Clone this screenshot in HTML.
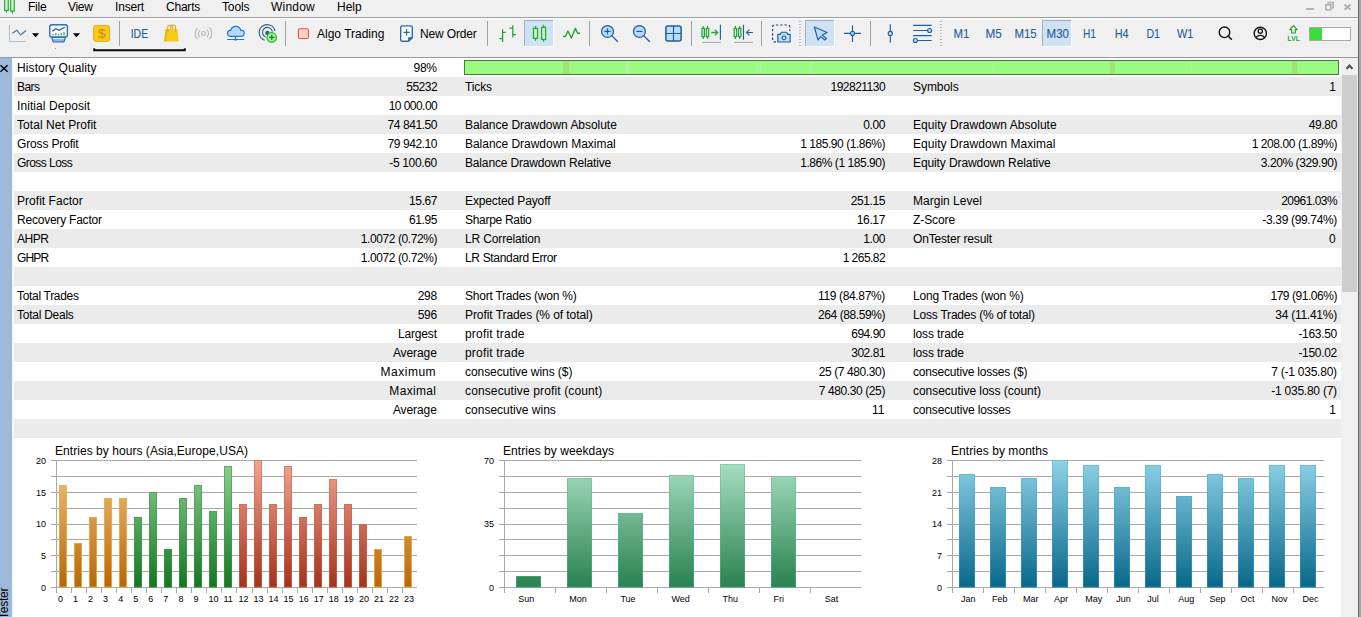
<!DOCTYPE html>
<html><head><meta charset="utf-8"><title>Tester</title>
<style>
*{margin:0;padding:0;box-sizing:border-box}
html,body{width:1361px;height:617px;overflow:hidden;background:#f0f0f0;font-family:"Liberation Sans",sans-serif;font-size:12px;color:#000}
.abs{position:absolute}
#menubar{position:absolute;left:0;top:0;width:1358px;height:17px;background:#f0f0f0}
#menubar span{position:absolute;top:-1px;font-size:12px;line-height:16px;color:#000;white-space:nowrap}
#msep{position:absolute;left:0;top:17px;width:1358px;height:1px;background:#a0a0a0}
#msep2{position:absolute;left:0;top:18px;width:1358px;height:1px;background:#fff}
#toolbar{position:absolute;left:0;top:19px;width:1358px;height:38px;background:#f0f0f0}
#tsep{position:absolute;left:0;top:57px;width:1358px;height:1px;background:#999999}
.tt{position:absolute;font-size:12px;line-height:16px;white-space:nowrap}
.vsep{position:absolute;top:21px;width:1px;height:25px;background:#a0a0a0}
#left{position:absolute;left:0;top:58px;width:12px;height:559px;background:#9db9da}
#left2{position:absolute;left:12px;top:58px;width:2px;height:559px;background:#f4f7fb}
#content{position:absolute;left:14px;top:58px;width:1327px;height:559px;background:#fff}
.row{position:absolute;left:0;width:1327px;height:19px}
.g{background:#ebebeb}
.c{position:absolute;top:1px;height:19px;line-height:19px;font-size:12px;white-space:nowrap;color:#000}
.l{text-align:left}
.r{text-align:right}
.v{letter-spacing:-0.55px}
#sb{position:absolute;left:1341px;top:58px;width:17px;height:559px;background:#f0f0f0}
#thumb{position:absolute;left:1342px;top:75px;width:15px;height:217px;background:#cdcdcd}
#rb{position:absolute;left:1358px;top:0;width:1px;height:617px;background:#6c6c6c}
#rb2{position:absolute;left:1359px;top:0;width:2px;height:617px;background:#a4a4a4}
svg{position:absolute;left:0;top:0;overflow:visible}
svg text{font-family:"Liberation Sans",sans-serif}
</style></head><body>

<div id="menubar">
<span style="left:28px;letter-spacing:-0.25px">File</span>
<span style="left:68px;letter-spacing:-0.33px">View</span>
<span style="left:115px;letter-spacing:-0.17px">Insert</span>
<span style="left:166px;letter-spacing:-0.22px">Charts</span>
<span style="left:222px;letter-spacing:-0.14px">Tools</span>
<span style="left:271px;letter-spacing:0.22px">Window</span>
<span style="left:337px;letter-spacing:0px">Help</span>
</div><div id="msep"></div><div id="msep2"></div>
<div id="toolbar"></div><div id="tsep"></div>
<span class="tt" style="left:317px;top:26px;color:#000">Algo Trading</span>
<span class="tt" style="left:420px;top:26px;color:#000;letter-spacing:-0.15px">New Order</span>
<div class="vsep" style="left:119px"></div>
<div class="vsep" style="left:285px"></div>
<div class="vsep" style="left:487px"></div>
<div class="vsep" style="left:589px"></div>
<div class="vsep" style="left:691px"></div>
<div class="vsep" style="left:761px"></div>
<div class="vsep" style="left:870px"></div>
<svg id="icons" width="1361" height="58" viewBox="0 0 1361 58">
<!-- app icon -->
<g stroke="#1fa12e" stroke-width="1.1" fill="#c8f6c8">
<rect x="4.65" y="-3" width="3.6" height="13.5"/><path d="M6.45 10.5V12.7" fill="none"/>
<rect x="10.65" y="-3" width="3.6" height="14.1"/><path d="M12.45 11.1V13.8" fill="none"/>
</g>
<!-- window controls -->
<rect x="1306" y="8" width="8" height="2" fill="#b4b4b4"/>
<g fill="none" stroke="#b4b4b4" stroke-width="1.6"><rect x="1325.8" y="4.8" width="5" height="5"/><path d="M1328 4V2.6H1333.2V7.8H1331.6"/></g>
<path d="M1344.5 4.5L1350.5 9.5M1350.5 4.5L1344.5 9.5" stroke="#b0b0b0" stroke-width="2" fill="none"/>

<!-- 1 line chart icon -->
<path d="M9.5 25V41.5H26" fill="none" stroke="#b4bcc4" stroke-width="1"/>
<path d="M12.3 33.2L16.8 30.2L20.7 35L26 30.5" fill="none" stroke="#3878b4" stroke-width="1.15"/>
<path d="M32 33.2H39.2L35.6 37.3Z" fill="#000"/>
<!-- 2 monitor chart icon -->
<rect x="49.8" y="24.7" width="17.6" height="12.2" rx="2" fill="#f4faff" stroke="#2a70b4" stroke-width="1.4"/>
<path d="M51.8 37.5L53.2 41.9H64L65.4 37.5Z" fill="#d8ecfc" stroke="#2a70b4" stroke-width="1.2" stroke-linejoin="round"/>
<path d="M52.5 40H64.8" stroke="#2a70b4" stroke-width="0.8"/>
<path d="M52.3 31.3L55.8 28.8L59 30.3L64.7 27.3" fill="none" stroke="#3a5a78" stroke-width="1.2"/>
<path d="M53 35.5V34M55.8 35.5V33M58.5 35.5V34M61.3 35.5V33.3M64 35.5V32" stroke="#3aa83a" stroke-width="1.2"/>
<rect x="55" y="48" width="1" height="1" fill="#9a9a9a"/>
<path d="M72.8 33.2H80L76.4 37.3Z" fill="#000"/>
<!-- 3 dollar -->
<rect x="93.6" y="25.4" width="16" height="16" rx="2.2" fill="#fbc916" stroke="#e2ae20" stroke-width="1"/>
<text x="101.7" y="38.2" font-size="13.5" text-anchor="middle" fill="#c98c14" font-family="Liberation Sans">$</text>
<!-- underline annotation -->
<path d="M94.2 48.2V50.2H184.8V48.2" fill="none" stroke="#0a0a0a" stroke-width="1.9"/>
<!-- IDE -->
<text x="130.7" y="38" font-size="12.4" fill="#1f5f92" stroke="#1f5f92" stroke-width="0.12" font-family="Liberation Sans" textLength="17.4" lengthAdjust="spacingAndGlyphs">IDE</text>
<!-- bag -->
<path d="M167.6 30V28a2.5 3 0 0 1 5 0V30M170.6 30V28a2.5 3 0 0 1 5 0V30" fill="none" stroke="#dda520" stroke-width="1.05"/>
<path d="M165.7 29.2H177.4L178.8 41.6H164.2Z" fill="#f9ca12"/>
<path d="M165.7 29.2L167.2 29.2L166 41.6H164.2Z" fill="#e9b010"/>
<path d="M168 29.4V31.4M175.8 29.4V31.4" stroke="#c8921a" stroke-width="1"/>
<!-- signals ((o)) -->
<g fill="none" stroke="#bcbcbc" stroke-width="1.2">
<circle cx="203.5" cy="33.4" r="1.9"/>
<path d="M200.2 29.6a5 5 0 0 0 0 7.6M206.8 29.6a5 5 0 0 1 0 7.6"/>
<path d="M197.6 27.6a8.2 8.2 0 0 0 0 11.6M209.4 27.6a8.2 8.2 0 0 1 0 11.6"/>
</g>
<!-- cloud -->
<path d="M230.3 36.4H241.1A3.1 3.1 0 0 0 241.1 30.2L240.8 30.4A5.1 5.1 0 0 0 230.8 30.4A3 3 0 0 0 230.3 36.4Z" fill="#b4dafa" stroke="#2a78c0" stroke-width="1.2" stroke-linejoin="round"/>
<path d="M235.5 36.6V39.4M227 39.5H244.2" stroke="#2a78c0" stroke-width="1.2" fill="none"/>
<circle cx="235.5" cy="39.7" r="1.1" fill="#2a78c0"/>
<!-- radar -->
<g fill="none" stroke="#2c5c8c" stroke-width="1.15">
<path d="M264.6 40.2a8 8 0 1 1 10.4 -9.2"/>
<path d="M265.6 37a5 5 0 1 1 6.8 -5.4"/>
<circle cx="267.4" cy="33" r="1.6" fill="#2c5c8c"/>
</g>
<circle cx="271.7" cy="37.4" r="4.7" fill="#9af09a" stroke="#2fb22f" stroke-width="1.2"/>
<path d="M269 37.4H274.4M271.7 34.7V40.1" stroke="#1c8a1c" stroke-width="1.3"/>
<!-- algo square -->
<rect x="298.4" y="28.7" width="10" height="9.8" rx="1.6" fill="#fdd2c4" stroke="#e05252" stroke-width="1.1"/>
<!-- new order -->
<path d="M402.2 25.9H410.8a1.5 1.5 0 0 1 1.5 1.5V37.6L408.6 41.2H402.2a1.5 1.5 0 0 1 -1.5 -1.5V27.4a1.5 1.5 0 0 1 1.5 -1.5Z" fill="#fff" stroke="#2a6aa8" stroke-width="1.4"/>
<path d="M412.3 37.6H408.6V41.2Z" fill="#2a6aa8" stroke="#2a6aa8" stroke-width="0.8"/>
<path d="M403.4 32.3H409.8M406.6 29.1V35.5" stroke="#2a6aa8" stroke-width="1.2"/>
<!-- bar chart icon -->
<g fill="none" stroke="#22a236" stroke-width="1.25">
<path d="M502.6 29.2V42M499.2 38.5H502.6M502.6 32.3H505.8"/>
<path d="M512.8 25.3V37.6M509.4 28.2H512.8M512.8 34.5H516"/>
</g>
<!-- candles selected -->
<rect x="524" y="20" width="29" height="26" fill="#cfe1f5"/>
<path d="M524.5 46V20.5H553" fill="none" stroke="#a6b0bc" stroke-width="1"/>
<path d="M524.5 46.5H553.5V20.5" fill="none" stroke="#fff" stroke-width="1"/>
<g stroke="#1fb030" stroke-width="1.3" fill="#cdf5cd">
<path d="M535.5 26V28.3M535.5 38.5V40.8" fill="none"/><rect x="533.5" y="28.4" width="4" height="10"/>
<path d="M543.6 24.8V27.3M543.6 39.4V41.7" fill="none"/><rect x="541.6" y="27.4" width="4" height="12"/>
</g>
<!-- zigzag -->
<path d="M563 36.5H565.4L567.9 31L571.4 38L575.4 28.3L577.6 33.2H580" fill="none" stroke="#22a236" stroke-width="1.4" stroke-linejoin="round"/>
<!-- zoom in/out -->
<g stroke="#1f5f98" stroke-width="1.25" fill="#bbddfb">
<circle cx="607.5" cy="31.4" r="5.9"/><path d="M611.8 35.8L617.8 41.7" fill="none"/><path d="M604.4 31.4H610.6M607.5 28.3V34.5" fill="none" stroke-width="1.2"/>
<circle cx="639.4" cy="31.4" r="5.9"/><path d="M643.7 35.8L649.8 41.7" fill="none"/><path d="M636.3 31.4H642.5" fill="none" stroke-width="1.2"/>
</g>
<!-- grid -->
<rect x="665.9" y="25.9" width="15.2" height="15.2" rx="2" fill="#bbddfb" stroke="#1f5f98" stroke-width="1.5"/>
<path d="M673.5 26V41M666 33.5H681" stroke="#1f5f98" stroke-width="1.15"/>
<!-- autoscroll -->
<g stroke="#22a236" stroke-width="1.2" fill="#d0f4d0">
<path d="M703.2 26V28.4M703.2 36.6V39" fill="none"/><rect x="702" y="28.4" width="2.4" height="8.2"/>
<path d="M707.5 26V28.4M707.5 36.6V39" fill="none"/><rect x="706.3" y="28.4" width="2.4" height="8.2"/>
<path d="M711.2 32.5H717.6M714.8 29.6L717.7 32.5L714.8 35.4" fill="none" stroke-width="1.3"/>
</g>
<path d="M720.4 24.8V39.8" stroke="#1f5f98" stroke-width="1.15"/>
<path d="M702 42.4H721" stroke="#a0a0a0" stroke-width="0.9"/>
<!-- shift -->
<g stroke="#22a236" stroke-width="1.2" fill="#d0f4d0">
<path d="M735.4 26V28.4M735.4 36.6V39" fill="none"/><rect x="734.2" y="28.4" width="2.4" height="8.2"/>
<path d="M739.7 26V28.4M739.7 36.6V39" fill="none"/><rect x="738.5" y="28.4" width="2.4" height="8.2"/>
</g>
<path d="M743.5 24.8V39.8M753 32.5H746.6M749.4 29.6L746.5 32.5L749.4 35.4" stroke="#1f5f98" stroke-width="1.15" fill="none"/>
<path d="M734 42.4H753" stroke="#a0a0a0" stroke-width="0.9"/>
<!-- camera -->
<path d="M776 41.9H774.4a1.8 1.8 0 0 1 -1.8 -1.8V26.8a1.8 1.8 0 0 1 1.8 -1.8H788a1.8 1.8 0 0 1 1.8 1.8V31" fill="none" stroke="#2a4a68" stroke-width="1.2" stroke-dasharray="2.4 1.9"/>
<path d="M777.8 42V34.4H780.2L781.6 32.2H786.4L787.8 34.4H790.2V42Z" fill="#bbddfb" stroke="#1f5f98" stroke-width="1.15" stroke-linejoin="round"/>
<circle cx="784" cy="37.8" r="1.8" fill="#e8f4ff" stroke="#1f5f98" stroke-width="1.2"/>
<!-- grips -->
<rect x="799" y="21" width="2" height="1" fill="#b8b8b8"/><rect x="800" y="22" width="1" height="1" fill="#fff"/><rect x="799" y="24" width="2" height="1" fill="#b8b8b8"/><rect x="800" y="25" width="1" height="1" fill="#fff"/><rect x="799" y="27" width="2" height="1" fill="#b8b8b8"/><rect x="800" y="28" width="1" height="1" fill="#fff"/><rect x="799" y="30" width="2" height="1" fill="#b8b8b8"/><rect x="800" y="31" width="1" height="1" fill="#fff"/><rect x="799" y="33" width="2" height="1" fill="#b8b8b8"/><rect x="800" y="34" width="1" height="1" fill="#fff"/><rect x="799" y="36" width="2" height="1" fill="#b8b8b8"/><rect x="800" y="37" width="1" height="1" fill="#fff"/><rect x="799" y="39" width="2" height="1" fill="#b8b8b8"/><rect x="800" y="40" width="1" height="1" fill="#fff"/><rect x="799" y="42" width="2" height="1" fill="#b8b8b8"/><rect x="800" y="43" width="1" height="1" fill="#fff"/><rect x="799" y="45" width="2" height="1" fill="#b8b8b8"/><rect x="800" y="46" width="1" height="1" fill="#fff"/><rect x="940" y="21" width="2" height="1" fill="#b8b8b8"/><rect x="941" y="22" width="1" height="1" fill="#fff"/><rect x="940" y="24" width="2" height="1" fill="#b8b8b8"/><rect x="941" y="25" width="1" height="1" fill="#fff"/><rect x="940" y="27" width="2" height="1" fill="#b8b8b8"/><rect x="941" y="28" width="1" height="1" fill="#fff"/><rect x="940" y="30" width="2" height="1" fill="#b8b8b8"/><rect x="941" y="31" width="1" height="1" fill="#fff"/><rect x="940" y="33" width="2" height="1" fill="#b8b8b8"/><rect x="941" y="34" width="1" height="1" fill="#fff"/><rect x="940" y="36" width="2" height="1" fill="#b8b8b8"/><rect x="941" y="37" width="1" height="1" fill="#fff"/><rect x="940" y="39" width="2" height="1" fill="#b8b8b8"/><rect x="941" y="40" width="1" height="1" fill="#fff"/><rect x="940" y="42" width="2" height="1" fill="#b8b8b8"/><rect x="941" y="43" width="1" height="1" fill="#fff"/><rect x="940" y="45" width="2" height="1" fill="#b8b8b8"/><rect x="941" y="46" width="1" height="1" fill="#fff"/>
<!-- cursor selected -->
<rect x="805" y="20" width="29" height="26" fill="#cfe1f5"/>
<path d="M805.5 46V20.5H834" fill="none" stroke="#a6b0bc" stroke-width="1"/>
<path d="M805.5 46.5H834.5V20.5" fill="none" stroke="#fff" stroke-width="1"/>
<path d="M814.3 27L827 32.5L822.2 35.1L826.5 38.5L824.8 40L820.7 36.6L818.1 40Z" fill="#bbddfb" stroke="#1f5f98" stroke-width="1.15" stroke-linejoin="round"/>
<!-- crosshair -->
<path d="M844 33.4H861M852.5 25.4V41.9" stroke="#1f5f98" stroke-width="1.15"/>
<circle cx="852.5" cy="33.4" r="2" fill="#bbddfb" stroke="#1f5f98" stroke-width="1.1"/>
<!-- vline -->
<path d="M890.3 24.3V42.8" stroke="#1f5f98" stroke-width="1.15"/>
<circle cx="890.3" cy="33.5" r="2.1" fill="#bbddfb" stroke="#1f5f98" stroke-width="1.1"/>
<!-- lines -->
<path d="M913.2 25.4H931.7M913.2 30.5H927.6M913.2 35.6H931.7M917.4 40.5H931.7" stroke="#1f5f98" stroke-width="1.15"/>
<circle cx="929.6" cy="30.5" r="2" fill="#bbddfb" stroke="#1f5f98" stroke-width="1.1"/>
<circle cx="915.4" cy="40.5" r="2" fill="#bbddfb" stroke="#1f5f98" stroke-width="1.1"/>
<!-- M30 selected -->
<rect x="1042" y="20" width="29" height="26" fill="#cfe1f5"/>
<path d="M1042.5 46V20.5H1071" fill="none" stroke="#a6b0bc" stroke-width="1"/>
<path d="M1042.5 46.5H1071.5V20.5" fill="none" stroke="#fff" stroke-width="1"/>
<g font-size="12.4" fill="#22609a" stroke="#22609a" stroke-width="0.1" font-family="Liberation Sans">
<text x="953.5" y="38" textLength="15.8" lengthAdjust="spacingAndGlyphs">M1</text>
<text x="985.5" y="38" textLength="16.3" lengthAdjust="spacingAndGlyphs">M5</text>
<text x="1014.4" y="38" textLength="22.2" lengthAdjust="spacingAndGlyphs">M15</text>
<text x="1046.6" y="38" textLength="22.4" lengthAdjust="spacingAndGlyphs">M30</text>
<text x="1083" y="38" textLength="13" lengthAdjust="spacingAndGlyphs">H1</text>
<text x="1114.7" y="38" textLength="13.9" lengthAdjust="spacingAndGlyphs">H4</text>
<text x="1146.4" y="38" textLength="13.5" lengthAdjust="spacingAndGlyphs">D1</text>
<text x="1177" y="38" textLength="16.4" lengthAdjust="spacingAndGlyphs">W1</text>
</g>
<!-- search -->
<circle cx="1224.5" cy="32.3" r="5.3" fill="none" stroke="#111" stroke-width="1.4"/>
<path d="M1228.4 36.2L1231.8 39.7" stroke="#111" stroke-width="1.5"/>
<!-- account -->
<circle cx="1260.3" cy="33.4" r="6.1" fill="none" stroke="#111" stroke-width="1.4"/>
<circle cx="1260.3" cy="31.3" r="2.1" fill="none" stroke="#111" stroke-width="1.3"/>
<path d="M1256 37.8a4.6 3.8 0 0 1 8.6 0" fill="none" stroke="#111" stroke-width="1.3"/>
<!-- LVL -->
<path d="M1293.5 25.7L1297.2 29.6H1295.3V33H1291.7V29.6H1289.8Z" fill="none" stroke="#22a236" stroke-width="1.2" stroke-linejoin="round"/>
<text x="1287.6" y="40.8" font-size="7.4" font-weight="bold" fill="#22a236" font-family="Liberation Sans" textLength="12.2" lengthAdjust="spacingAndGlyphs">LVL</text>
<!-- progress -->
<rect x="1309.5" y="27.5" width="41" height="13" fill="#fff" stroke="#a8a8a8" stroke-width="1"/>
<rect x="1310" y="28" width="12" height="12" fill="#3edb3e"/>

</svg>
<div id="left"></div><div id="left2"></div>
<div id="content">
<div class="row" style="top:0px">
<span class="c l" style="left:3px;letter-spacing:0.10px">History Quality</span>
<span class="c r" style="right:904.19px;letter-spacing:-0.21px">98%</span>
</div>
<div class="row g" style="top:19px">
<span class="c l" style="left:3px;letter-spacing:-0.57px">Bars</span>
<span class="c r" style="right:903.90px;letter-spacing:-0.50px">55232</span>
<span class="c l" style="left:451px;letter-spacing:-0.13px">Ticks</span>
<span class="c r" style="right:455.89px;letter-spacing:-0.51px">192821130</span>
<span class="c l" style="left:899px;letter-spacing:-0.05px">Symbols</span>
<span class="c r" style="right:4.71px;letter-spacing:0.31px">1</span>
</div>
<div class="row" style="top:38px">
<span class="c l" style="left:3px;letter-spacing:0.07px">Initial Deposit</span>
<span class="c r" style="right:903.85px;letter-spacing:-0.55px">10 000.00</span>
</div>
<div class="row g" style="top:57px">
<span class="c l" style="left:3px;letter-spacing:0.05px">Total Net Profit</span>
<span class="c r" style="right:903.97px;letter-spacing:-0.43px">74 841.50</span>
<span class="c l" style="left:451px;letter-spacing:-0.04px">Balance Drawdown Absolute</span>
<span class="c r" style="right:456.01px;letter-spacing:-0.39px">0.00</span>
<span class="c l" style="left:899px;letter-spacing:0.04px">Equity Drawdown Absolute</span>
<span class="c r" style="right:4.03px;letter-spacing:-0.37px">49.80</span>
</div>
<div class="row" style="top:76px">
<span class="c l" style="left:3px;letter-spacing:-0.15px">Gross Profit</span>
<span class="c r" style="right:903.97px;letter-spacing:-0.43px">79 942.10</span>
<span class="c l" style="left:451px;letter-spacing:-0.03px">Balance Drawdown Maximal</span>
<span class="c r" style="right:455.95px;letter-spacing:-0.45px">1 185.90 (1.86%)</span>
<span class="c l" style="left:899px;letter-spacing:0.05px">Equity Drawdown Maximal</span>
<span class="c r" style="right:3.98px;letter-spacing:-0.42px">1 208.00 (1.89%)</span>
</div>
<div class="row g" style="top:95px">
<span class="c l" style="left:3px;letter-spacing:-0.55px">Gross Loss</span>
<span class="c r" style="right:904.06px;letter-spacing:-0.34px">-5 100.60</span>
<span class="c l" style="left:451px;letter-spacing:-0.16px">Balance Drawdown Relative</span>
<span class="c r" style="right:455.95px;letter-spacing:-0.45px">1.86% (1 185.90)</span>
<span class="c l" style="left:899px;letter-spacing:-0.10px">Equity Drawdown Relative</span>
<span class="c r" style="right:3.99px;letter-spacing:-0.41px">3.20% (329.90)</span>
</div>
<div class="row" style="top:114px">
</div>
<div class="row g" style="top:133px">
<span class="c l" style="left:3px;letter-spacing:0.04px">Profit Factor</span>
<span class="c r" style="right:904.01px;letter-spacing:-0.39px">15.67</span>
<span class="c l" style="left:451px;letter-spacing:-0.12px">Expected Payoff</span>
<span class="c r" style="right:456.00px;letter-spacing:-0.40px">251.15</span>
<span class="c l" style="left:899px;letter-spacing:0.01px">Margin Level</span>
<span class="c r" style="right:3.87px;letter-spacing:-0.53px">20961.03%</span>
</div>
<div class="row" style="top:152px">
<span class="c l" style="left:3px;letter-spacing:-0.22px">Recovery Factor</span>
<span class="c r" style="right:904.01px;letter-spacing:-0.39px">61.95</span>
<span class="c l" style="left:451px;letter-spacing:-0.30px">Sharpe Ratio</span>
<span class="c r" style="right:456.03px;letter-spacing:-0.37px">16.17</span>
<span class="c l" style="left:899px;letter-spacing:-0.08px">Z-Score</span>
<span class="c r" style="right:4.06px;letter-spacing:-0.34px">-3.39 (99.74%)</span>
</div>
<div class="row g" style="top:171px">
<span class="c l" style="left:3px;letter-spacing:-0.51px">AHPR</span>
<span class="c r" style="right:903.98px;letter-spacing:-0.42px">1.0072 (0.72%)</span>
<span class="c l" style="left:451px;letter-spacing:-0.14px">LR Correlation</span>
<span class="c r" style="right:456.01px;letter-spacing:-0.39px">1.00</span>
<span class="c l" style="left:899px;letter-spacing:-0.17px">OnTester result</span>
<span class="c r" style="right:4.90px;letter-spacing:0.50px">0</span>
</div>
<div class="row" style="top:190px">
<span class="c l" style="left:3px;letter-spacing:-0.84px">GHPR</span>
<span class="c r" style="right:903.98px;letter-spacing:-0.42px">1.0072 (0.72%)</span>
<span class="c l" style="left:451px;letter-spacing:-0.33px">LR Standard Error</span>
<span class="c r" style="right:455.87px;letter-spacing:-0.53px">1 265.82</span>
</div>
<div class="row g" style="top:209px">
</div>
<div class="row" style="top:228px">
<span class="c l" style="left:3px;letter-spacing:-0.31px">Total Trades</span>
<span class="c r" style="right:904.12px;letter-spacing:-0.28px">298</span>
<span class="c l" style="left:451px;letter-spacing:-0.23px">Short Trades (won %)</span>
<span class="c r" style="right:456.05px;letter-spacing:-0.35px">119 (84.87%)</span>
<span class="c l" style="left:899px;letter-spacing:-0.19px">Long Trades (won %)</span>
<span class="c r" style="right:3.95px;letter-spacing:-0.45px">179 (91.06%)</span>
</div>
<div class="row g" style="top:247px">
<span class="c l" style="left:3px;letter-spacing:-0.25px">Total Deals</span>
<span class="c r" style="right:904.12px;letter-spacing:-0.28px">596</span>
<span class="c l" style="left:451px;letter-spacing:-0.07px">Profit Trades (% of total)</span>
<span class="c r" style="right:455.98px;letter-spacing:-0.42px">264 (88.59%)</span>
<span class="c l" style="left:899px;letter-spacing:-0.21px">Loss Trades (% of total)</span>
<span class="c r" style="right:4.13px;letter-spacing:-0.27px">34 (11.41%)</span>
</div>
<div class="row" style="top:266px">
<span class="c r" style="right:904.21px;letter-spacing:-0.19px">Largest</span>
<span class="c l" style="left:451px;letter-spacing:0.19px">profit trade</span>
<span class="c r" style="right:455.93px;letter-spacing:-0.47px">694.90</span>
<span class="c l" style="left:899px;letter-spacing:-0.11px">loss trade</span>
<span class="c r" style="right:4.09px;letter-spacing:-0.31px">-163.50</span>
</div>
<div class="row g" style="top:285px">
<span class="c r" style="right:904.30px;letter-spacing:-0.10px">Average</span>
<span class="c l" style="left:451px;letter-spacing:0.19px">profit trade</span>
<span class="c r" style="right:455.93px;letter-spacing:-0.47px">302.81</span>
<span class="c l" style="left:899px;letter-spacing:-0.11px">loss trade</span>
<span class="c r" style="right:4.09px;letter-spacing:-0.31px">-150.02</span>
</div>
<div class="row" style="top:304px">
<span class="c r" style="right:904.90px;letter-spacing:0.50px">Maximum</span>
<span class="c l" style="left:451px;letter-spacing:-0.07px">consecutive wins ($)</span>
<span class="c r" style="right:456.01px;letter-spacing:-0.39px">25 (7 480.30)</span>
<span class="c l" style="left:899px;letter-spacing:-0.20px">consecutive losses ($)</span>
<span class="c r" style="right:4.16px;letter-spacing:-0.24px">7 (-1 035.80)</span>
</div>
<div class="row g" style="top:323px">
<span class="c r" style="right:904.72px;letter-spacing:0.32px">Maximal</span>
<span class="c l" style="left:451px;letter-spacing:0.13px">consecutive profit (count)</span>
<span class="c r" style="right:456.01px;letter-spacing:-0.39px">7 480.30 (25)</span>
<span class="c l" style="left:899px;letter-spacing:-0.03px">consecutive loss (count)</span>
<span class="c r" style="right:4.16px;letter-spacing:-0.24px">-1 035.80 (7)</span>
</div>
<div class="row" style="top:342px">
<span class="c r" style="right:904.30px;letter-spacing:-0.10px">Average</span>
<span class="c l" style="left:451px;letter-spacing:0.01px">consecutive wins</span>
<span class="c r" style="right:456.47px;letter-spacing:0.07px">11</span>
<span class="c l" style="left:899px;letter-spacing:-0.17px">consecutive losses</span>
<span class="c r" style="right:4.71px;letter-spacing:0.31px">1</span>
</div>
<div class="row g" style="top:361px">
</div>
<div class="abs" style="left:450px;top:2px;width:875px;height:15px;background:#99fb7f;border:1px solid #4a7842"></div>
<div class="abs" style="left:549px;top:3px;width:6px;height:13px;background:#a0e476"></div>
<div class="abs" style="left:557px;top:3px;width:1px;height:13px;background:#a8f294"></div>
<div class="abs" style="left:612px;top:3px;width:3px;height:13px;background:#b6f0a6"></div>
<div class="abs" style="left:743px;top:3px;width:1px;height:13px;background:#b6f0a6"></div>
<div class="abs" style="left:746px;top:3px;width:1px;height:13px;background:#b6f0a6"></div>
<div class="abs" style="left:796px;top:3px;width:2px;height:13px;background:#b6f0a6"></div>
<div class="abs" style="left:979px;top:3px;width:1px;height:13px;background:#b6f0a6"></div>
<div class="abs" style="left:1096px;top:3px;width:5px;height:13px;background:#a0e476"></div>
<div class="abs" style="left:1177px;top:3px;width:1px;height:13px;background:#b6f0a6"></div>
<div class="abs" style="left:1278px;top:3px;width:5px;height:13px;background:#a0e476"></div>
</div>
<div id="sb"></div><div id="thumb"></div>
<svg width="1361" height="617" viewBox="0 0 1361 617" style="pointer-events:none"><path d="M1346.5 68.9 L1349.5 65.5 L1352.5 68.9" fill="none" stroke="#4c4c4c" stroke-width="2.1"/></svg>
<div id="rb"></div><div id="rb2"></div>
<div class="abs" style="left:-3.5px;top:619px;transform-origin:0 0;transform:rotate(-90deg);font-size:12px;line-height:14px;letter-spacing:-0.25px;white-space:nowrap;color:#000">Tester</div>
<svg width="14" height="80" viewBox="0 0 14 80"><path d="M0.4 65.2 L7.6 71.8 M7.6 65.2 L0.4 71.8" stroke="#000" stroke-width="1.5" fill="none"/></svg>
<svg id="charts" width="1361" height="617" viewBox="0 0 1361 617"><defs>
<linearGradient id="go" gradientUnits="userSpaceOnUse" x1="0" y1="460" x2="0" y2="588"><stop offset="0" stop-color="#f3c67c"/><stop offset="1" stop-color="#b5660c"/></linearGradient>
<linearGradient id="gos" gradientUnits="userSpaceOnUse" x1="0" y1="460" x2="0" y2="588"><stop offset="0" stop-color="#ecb45c"/><stop offset="1" stop-color="#eaa02e"/></linearGradient>
<linearGradient id="gg" gradientUnits="userSpaceOnUse" x1="0" y1="460" x2="0" y2="588"><stop offset="0" stop-color="#90d296"/><stop offset="1" stop-color="#147620"/></linearGradient>
<linearGradient id="ggs" gradientUnits="userSpaceOnUse" x1="0" y1="460" x2="0" y2="588"><stop offset="0" stop-color="#62b06a"/><stop offset="1" stop-color="#2c8a34"/></linearGradient>
<linearGradient id="gr" gradientUnits="userSpaceOnUse" x1="0" y1="460" x2="0" y2="588"><stop offset="0" stop-color="#f2a692"/><stop offset="1" stop-color="#a3321a"/></linearGradient>
<linearGradient id="grs" gradientUnits="userSpaceOnUse" x1="0" y1="460" x2="0" y2="588"><stop offset="0" stop-color="#d4826e"/><stop offset="1" stop-color="#c0523a"/></linearGradient>
<linearGradient id="gw" gradientUnits="userSpaceOnUse" x1="0" y1="460" x2="0" y2="588"><stop offset="0" stop-color="#aae0c4"/><stop offset="1" stop-color="#27814f"/></linearGradient>
<linearGradient id="gws" gradientUnits="userSpaceOnUse" x1="0" y1="460" x2="0" y2="588"><stop offset="0" stop-color="#8ad0ae"/><stop offset="1" stop-color="#3e9868"/></linearGradient>
<linearGradient id="gb" gradientUnits="userSpaceOnUse" x1="0" y1="460" x2="0" y2="588"><stop offset="0" stop-color="#8ed2e6"/><stop offset="1" stop-color="#07678a"/></linearGradient>
<linearGradient id="gbs" gradientUnits="userSpaceOnUse" x1="0" y1="460" x2="0" y2="588"><stop offset="0" stop-color="#70c0da"/><stop offset="1" stop-color="#1f80a2"/></linearGradient>
</defs>
<rect x="51" y="460" width="366" height="1" fill="#a9a9a9"/>
<rect x="51" y="476" width="366" height="1" fill="#a9a9a9"/>
<rect x="51" y="492" width="366" height="1" fill="#a9a9a9"/>
<rect x="51" y="508" width="366" height="1" fill="#a9a9a9"/>
<rect x="51" y="524" width="366" height="1" fill="#a9a9a9"/>
<rect x="51" y="539" width="366" height="1" fill="#a9a9a9"/>
<rect x="51" y="555" width="366" height="1" fill="#a9a9a9"/>
<rect x="51" y="571" width="366" height="1" fill="#a9a9a9"/>
<rect x="51" y="587" width="366" height="1" fill="#a9a9a9"/>
<rect x="56" y="460" width="1" height="133" fill="#a9a9a9"/>
<rect x="71" y="587" width="1" height="6" fill="#a9a9a9"/>
<rect x="86" y="587" width="1" height="6" fill="#a9a9a9"/>
<rect x="101" y="587" width="1" height="6" fill="#a9a9a9"/>
<rect x="116" y="587" width="1" height="6" fill="#a9a9a9"/>
<rect x="131" y="587" width="1" height="6" fill="#a9a9a9"/>
<rect x="146" y="587" width="1" height="6" fill="#a9a9a9"/>
<rect x="161" y="587" width="1" height="6" fill="#a9a9a9"/>
<rect x="176" y="587" width="1" height="6" fill="#a9a9a9"/>
<rect x="191" y="587" width="1" height="6" fill="#a9a9a9"/>
<rect x="206" y="587" width="1" height="6" fill="#a9a9a9"/>
<rect x="221" y="587" width="1" height="6" fill="#a9a9a9"/>
<rect x="236" y="587" width="1" height="6" fill="#a9a9a9"/>
<rect x="252" y="587" width="1" height="6" fill="#a9a9a9"/>
<rect x="267" y="587" width="1" height="6" fill="#a9a9a9"/>
<rect x="282" y="587" width="1" height="6" fill="#a9a9a9"/>
<rect x="297" y="587" width="1" height="6" fill="#a9a9a9"/>
<rect x="312" y="587" width="1" height="6" fill="#a9a9a9"/>
<rect x="327" y="587" width="1" height="6" fill="#a9a9a9"/>
<rect x="342" y="587" width="1" height="6" fill="#a9a9a9"/>
<rect x="357" y="587" width="1" height="6" fill="#a9a9a9"/>
<rect x="372" y="587" width="1" height="6" fill="#a9a9a9"/>
<rect x="387" y="587" width="1" height="6" fill="#a9a9a9"/>
<rect x="402" y="587" width="1" height="6" fill="#a9a9a9"/>
<rect x="59.5" y="485.5" width="7" height="101.5" fill="url(#go)" stroke="url(#gos)" stroke-width="1"/>
<rect x="74.5" y="543.5" width="7" height="43.5" fill="url(#go)" stroke="url(#gos)" stroke-width="1"/>
<rect x="89.5" y="517.5" width="7" height="69.5" fill="url(#go)" stroke="url(#gos)" stroke-width="1"/>
<rect x="104.5" y="498.5" width="7" height="88.5" fill="url(#go)" stroke="url(#gos)" stroke-width="1"/>
<rect x="119.5" y="498.5" width="7" height="88.5" fill="url(#go)" stroke="url(#gos)" stroke-width="1"/>
<rect x="134.5" y="517.5" width="7" height="69.5" fill="url(#gg)" stroke="url(#ggs)" stroke-width="1"/>
<rect x="149.5" y="492.5" width="7" height="94.5" fill="url(#gg)" stroke="url(#ggs)" stroke-width="1"/>
<rect x="164.5" y="549.5" width="7" height="37.5" fill="url(#gg)" stroke="url(#ggs)" stroke-width="1"/>
<rect x="179.5" y="498.5" width="7" height="88.5" fill="url(#gg)" stroke="url(#ggs)" stroke-width="1"/>
<rect x="194.5" y="485.5" width="7" height="101.5" fill="url(#gg)" stroke="url(#ggs)" stroke-width="1"/>
<rect x="209.5" y="511.5" width="7" height="75.5" fill="url(#gg)" stroke="url(#ggs)" stroke-width="1"/>
<rect x="224.5" y="466.5" width="7" height="120.5" fill="url(#gg)" stroke="url(#ggs)" stroke-width="1"/>
<rect x="239.5" y="504.5" width="7" height="82.5" fill="url(#gr)" stroke="url(#grs)" stroke-width="1"/>
<rect x="254.5" y="460.5" width="7" height="126.5" fill="url(#gr)" stroke="url(#grs)" stroke-width="1"/>
<rect x="269.5" y="504.5" width="7" height="82.5" fill="url(#gr)" stroke="url(#grs)" stroke-width="1"/>
<rect x="284.5" y="466.5" width="7" height="120.5" fill="url(#gr)" stroke="url(#grs)" stroke-width="1"/>
<rect x="299.5" y="517.5" width="7" height="69.5" fill="url(#gr)" stroke="url(#grs)" stroke-width="1"/>
<rect x="314.5" y="504.5" width="7" height="82.5" fill="url(#gr)" stroke="url(#grs)" stroke-width="1"/>
<rect x="329.5" y="479.5" width="7" height="107.5" fill="url(#gr)" stroke="url(#grs)" stroke-width="1"/>
<rect x="344.5" y="504.5" width="7" height="82.5" fill="url(#gr)" stroke="url(#grs)" stroke-width="1"/>
<rect x="359.5" y="524.5" width="7" height="62.5" fill="url(#gr)" stroke="url(#grs)" stroke-width="1"/>
<rect x="374.5" y="549.5" width="7" height="37.5" fill="url(#go)" stroke="url(#gos)" stroke-width="1"/>
<rect x="404.5" y="536.5" width="7" height="50.5" fill="url(#go)" stroke="url(#gos)" stroke-width="1"/>
<text x="46" y="590.8" font-size="9" text-anchor="end" fill="#000">0</text>
<text x="46" y="559.0" font-size="9" text-anchor="end" fill="#000">5</text>
<text x="46" y="527.3" font-size="9" text-anchor="end" fill="#000">10</text>
<text x="46" y="495.6" font-size="9" text-anchor="end" fill="#000">15</text>
<text x="46" y="463.8" font-size="9" text-anchor="end" fill="#000">20</text>
<text x="58.0" y="602" font-size="9" fill="#000">0</text>
<text x="73.1" y="602" font-size="9" fill="#000">1</text>
<text x="88.1" y="602" font-size="9" fill="#000">2</text>
<text x="103.1" y="602" font-size="9" fill="#000">3</text>
<text x="118.2" y="602" font-size="9" fill="#000">4</text>
<text x="133.2" y="602" font-size="9" fill="#000">5</text>
<text x="148.3" y="602" font-size="9" fill="#000">6</text>
<text x="163.3" y="602" font-size="9" fill="#000">7</text>
<text x="178.4" y="602" font-size="9" fill="#000">8</text>
<text x="193.4" y="602" font-size="9" fill="#000">9</text>
<text x="208.4" y="602" font-size="9" fill="#000">10</text>
<text x="223.5" y="602" font-size="9" fill="#000">11</text>
<text x="238.5" y="602" font-size="9" fill="#000">12</text>
<text x="253.6" y="602" font-size="9" fill="#000">13</text>
<text x="268.6" y="602" font-size="9" fill="#000">14</text>
<text x="283.6" y="602" font-size="9" fill="#000">15</text>
<text x="298.7" y="602" font-size="9" fill="#000">16</text>
<text x="313.7" y="602" font-size="9" fill="#000">17</text>
<text x="328.8" y="602" font-size="9" fill="#000">18</text>
<text x="343.8" y="602" font-size="9" fill="#000">19</text>
<text x="358.9" y="602" font-size="9" fill="#000">20</text>
<text x="373.9" y="602" font-size="9" fill="#000">21</text>
<text x="388.9" y="602" font-size="9" fill="#000">22</text>
<text x="404.0" y="602" font-size="9" fill="#000">23</text>
<text x="55" y="455" font-size="12" fill="#000" textLength="193" lengthAdjust="spacing">Entries by hours (Asia,Europe,USA)</text>
<rect x="499" y="460" width="362.5" height="1" fill="#a9a9a9"/>
<rect x="499" y="476" width="362.5" height="1" fill="#a9a9a9"/>
<rect x="499" y="492" width="362.5" height="1" fill="#a9a9a9"/>
<rect x="499" y="508" width="362.5" height="1" fill="#a9a9a9"/>
<rect x="499" y="524" width="362.5" height="1" fill="#a9a9a9"/>
<rect x="499" y="539" width="362.5" height="1" fill="#a9a9a9"/>
<rect x="499" y="555" width="362.5" height="1" fill="#a9a9a9"/>
<rect x="499" y="571" width="362.5" height="1" fill="#a9a9a9"/>
<rect x="499" y="587" width="362.5" height="1" fill="#a9a9a9"/>
<rect x="504" y="460" width="1" height="133" fill="#a9a9a9"/>
<rect x="555" y="587" width="1" height="6" fill="#a9a9a9"/>
<rect x="606" y="587" width="1" height="6" fill="#a9a9a9"/>
<rect x="657" y="587" width="1" height="6" fill="#a9a9a9"/>
<rect x="708" y="587" width="1" height="6" fill="#a9a9a9"/>
<rect x="759" y="587" width="1" height="6" fill="#a9a9a9"/>
<rect x="810" y="587" width="1" height="6" fill="#a9a9a9"/>
<rect x="516.5" y="576.5" width="24" height="10.5" fill="url(#gw)" stroke="url(#gws)" stroke-width="1"/>
<rect x="567.5" y="478.5" width="24" height="108.5" fill="url(#gw)" stroke="url(#gws)" stroke-width="1"/>
<rect x="618.5" y="513.5" width="24" height="73.5" fill="url(#gw)" stroke="url(#gws)" stroke-width="1"/>
<rect x="669.5" y="475.5" width="24" height="111.5" fill="url(#gw)" stroke="url(#gws)" stroke-width="1"/>
<rect x="720.5" y="464.5" width="24" height="122.5" fill="url(#gw)" stroke="url(#gws)" stroke-width="1"/>
<rect x="771.5" y="476.5" width="24" height="110.5" fill="url(#gw)" stroke="url(#gws)" stroke-width="1"/>
<text x="494" y="590.8" font-size="9" text-anchor="end" fill="#000">0</text>
<text x="494" y="527.3" font-size="9" text-anchor="end" fill="#000">35</text>
<text x="494" y="463.8" font-size="9" text-anchor="end" fill="#000">70</text>
<text x="518.2" y="602" font-size="9" fill="#000">Sun</text>
<text x="569.3" y="602" font-size="9" fill="#000">Mon</text>
<text x="620.4" y="602" font-size="9" fill="#000">Tue</text>
<text x="671.5" y="602" font-size="9" fill="#000">Wed</text>
<text x="722.5" y="602" font-size="9" fill="#000">Thu</text>
<text x="773.6" y="602" font-size="9" fill="#000">Fri</text>
<text x="824.7" y="602" font-size="9" fill="#000">Sat</text>
<text x="503" y="455" font-size="12" fill="#000" textLength="111" lengthAdjust="spacing">Entries by weekdays</text>
<rect x="947" y="460" width="377.5" height="1" fill="#a9a9a9"/>
<rect x="947" y="476" width="377.5" height="1" fill="#a9a9a9"/>
<rect x="947" y="492" width="377.5" height="1" fill="#a9a9a9"/>
<rect x="947" y="508" width="377.5" height="1" fill="#a9a9a9"/>
<rect x="947" y="524" width="377.5" height="1" fill="#a9a9a9"/>
<rect x="947" y="539" width="377.5" height="1" fill="#a9a9a9"/>
<rect x="947" y="555" width="377.5" height="1" fill="#a9a9a9"/>
<rect x="947" y="571" width="377.5" height="1" fill="#a9a9a9"/>
<rect x="947" y="587" width="377.5" height="1" fill="#a9a9a9"/>
<rect x="952" y="460" width="1" height="133" fill="#a9a9a9"/>
<rect x="983" y="587" width="1" height="6" fill="#a9a9a9"/>
<rect x="1014" y="587" width="1" height="6" fill="#a9a9a9"/>
<rect x="1045" y="587" width="1" height="6" fill="#a9a9a9"/>
<rect x="1076" y="587" width="1" height="6" fill="#a9a9a9"/>
<rect x="1107" y="587" width="1" height="6" fill="#a9a9a9"/>
<rect x="1138" y="587" width="1" height="6" fill="#a9a9a9"/>
<rect x="1169" y="587" width="1" height="6" fill="#a9a9a9"/>
<rect x="1200" y="587" width="1" height="6" fill="#a9a9a9"/>
<rect x="1231" y="587" width="1" height="6" fill="#a9a9a9"/>
<rect x="1262" y="587" width="1" height="6" fill="#a9a9a9"/>
<rect x="1293" y="587" width="1" height="6" fill="#a9a9a9"/>
<rect x="959.5" y="474.5" width="15" height="112.5" fill="url(#gb)" stroke="url(#gbs)" stroke-width="1"/>
<rect x="990.5" y="487.5" width="15" height="99.5" fill="url(#gb)" stroke="url(#gbs)" stroke-width="1"/>
<rect x="1021.5" y="478.5" width="15" height="108.5" fill="url(#gb)" stroke="url(#gbs)" stroke-width="1"/>
<rect x="1052.5" y="460.5" width="15" height="126.5" fill="url(#gb)" stroke="url(#gbs)" stroke-width="1"/>
<rect x="1083.5" y="465.5" width="15" height="121.5" fill="url(#gb)" stroke="url(#gbs)" stroke-width="1"/>
<rect x="1114.5" y="487.5" width="15" height="99.5" fill="url(#gb)" stroke="url(#gbs)" stroke-width="1"/>
<rect x="1145.5" y="465.5" width="15" height="121.5" fill="url(#gb)" stroke="url(#gbs)" stroke-width="1"/>
<rect x="1176.5" y="496.5" width="15" height="90.5" fill="url(#gb)" stroke="url(#gbs)" stroke-width="1"/>
<rect x="1207.5" y="474.5" width="15" height="112.5" fill="url(#gb)" stroke="url(#gbs)" stroke-width="1"/>
<rect x="1238.5" y="478.5" width="15" height="108.5" fill="url(#gb)" stroke="url(#gbs)" stroke-width="1"/>
<rect x="1269.5" y="465.5" width="15" height="121.5" fill="url(#gb)" stroke="url(#gbs)" stroke-width="1"/>
<rect x="1300.5" y="465.5" width="15" height="121.5" fill="url(#gb)" stroke="url(#gbs)" stroke-width="1"/>
<text x="942" y="590.8" font-size="9" text-anchor="end" fill="#000">0</text>
<text x="942" y="559.0" font-size="9" text-anchor="end" fill="#000">7</text>
<text x="942" y="527.3" font-size="9" text-anchor="end" fill="#000">14</text>
<text x="942" y="495.6" font-size="9" text-anchor="end" fill="#000">21</text>
<text x="942" y="463.8" font-size="9" text-anchor="end" fill="#000">28</text>
<text x="961.0" y="602" font-size="9" fill="#000">Jan</text>
<text x="992.1" y="602" font-size="9" fill="#000">Feb</text>
<text x="1023.1" y="602" font-size="9" fill="#000">Mar</text>
<text x="1054.1" y="602" font-size="9" fill="#000">Apr</text>
<text x="1085.2" y="602" font-size="9" fill="#000">May</text>
<text x="1116.2" y="602" font-size="9" fill="#000">Jun</text>
<text x="1147.3" y="602" font-size="9" fill="#000">Jul</text>
<text x="1178.3" y="602" font-size="9" fill="#000">Aug</text>
<text x="1209.4" y="602" font-size="9" fill="#000">Sep</text>
<text x="1240.4" y="602" font-size="9" fill="#000">Oct</text>
<text x="1271.4" y="602" font-size="9" fill="#000">Nov</text>
<text x="1302.5" y="602" font-size="9" fill="#000">Dec</text>
<text x="951" y="455" font-size="12" fill="#000" textLength="97" lengthAdjust="spacing">Entries by months</text>
</svg>
</body></html>
